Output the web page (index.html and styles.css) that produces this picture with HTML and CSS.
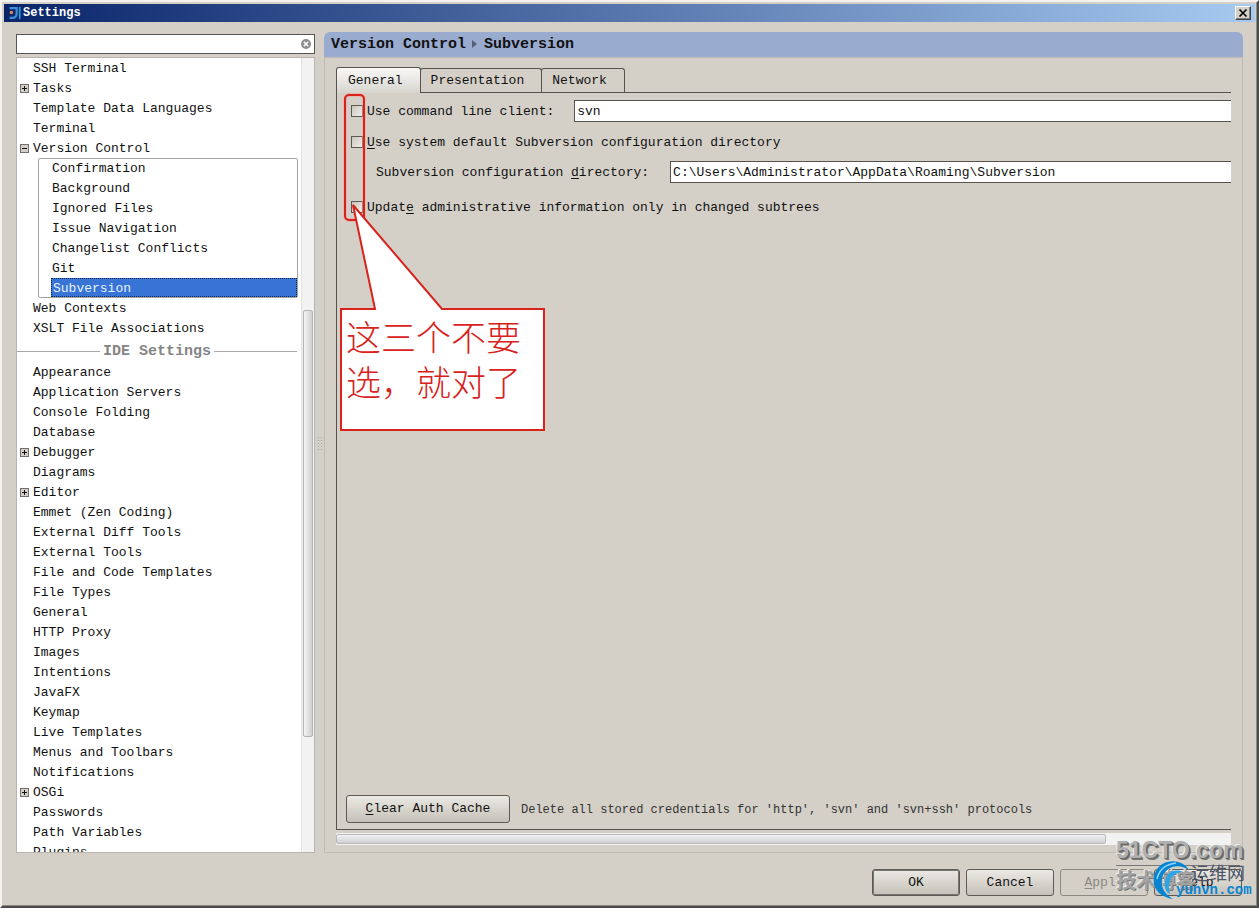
FILE: index.html
```html
<!DOCTYPE html>
<html lang="en">
<head>
<meta charset="utf-8">
<title>Settings</title>
<link rel="stylesheet" href="styles.css">
</head>
<body>
<div class="window">
  <header class="titlebar">
    <svg class="app-icon" viewBox="0 0 16 16" aria-hidden="true">
      <path d="M3 2.500h8v6q0 5-5 5H3" fill="none" stroke="#3f8fd6" stroke-width="2.500"/>
      <circle cx="5" cy="7.500" r="2" fill="#d98a55"/>
      <path d="M14.500 1v14" stroke="#2f9ad8" stroke-width="2"/>
    </svg>
    <h1 class="title">Settings</h1>
    <button class="close" aria-label="Close"><svg viewBox="0 0 10 10" aria-hidden="true"><path d="M1.500 1.500l7 7M8.500 1.500l-7 7" stroke="#000" stroke-width="1.700"/></svg></button>
  </header>

  <div class="content">
    <aside class="sidebar">
      <div class="search">
        <input class="search-input" type="text" aria-label="Search settings">
        <button class="clear" aria-label="Clear search"><svg viewBox="0 0 10 10" aria-hidden="true"><circle cx="5" cy="5" r="5" fill="#8c8c8c"/><path d="M2.800 2.800l4.400 4.400M7.200 2.800L2.800 7.200" stroke="#fff" stroke-width="1.500"/></svg></button>
      </div>
      <div class="tree">
        <div class="tree-view">
          <ul class="list">
            <li class="row">SSH Terminal</li>
            <li class="row"><button class="toggle plus" aria-label="Expand Tasks"></button>Tasks</li>
            <li class="row">Template Data Languages</li>
            <li class="row">Terminal</li>
            <li class="row"><button class="toggle" aria-label="Collapse Version Control"></button>Version Control</li>
          </ul>
          <ul class="list group">
            <li class="sub">Confirmation</li>
            <li class="sub">Background</li>
            <li class="sub">Ignored Files</li>
            <li class="sub">Issue Navigation</li>
            <li class="sub">Changelist Conflicts</li>
            <li class="sub">Git</li>
            <li class="sub selected">Subversion</li>
          </ul>
          <ul class="list">
            <li class="row">Web Contexts</li>
            <li class="row">XSLT File Associations</li>
          </ul>
          <h2 class="divider">IDE Settings</h2>
          <ul class="list">
            <li class="row">Appearance</li>
            <li class="row">Application Servers</li>
            <li class="row">Console Folding</li>
            <li class="row">Database</li>
            <li class="row"><button class="toggle plus" aria-label="Expand Debugger"></button>Debugger</li>
            <li class="row">Diagrams</li>
            <li class="row"><button class="toggle plus" aria-label="Expand Editor"></button>Editor</li>
            <li class="row">Emmet (Zen Coding)</li>
            <li class="row">External Diff Tools</li>
            <li class="row">External Tools</li>
            <li class="row">File and Code Templates</li>
            <li class="row">File Types</li>
            <li class="row">General</li>
            <li class="row">HTTP Proxy</li>
            <li class="row">Images</li>
            <li class="row">Intentions</li>
            <li class="row">JavaFX</li>
            <li class="row">Keymap</li>
            <li class="row">Live Templates</li>
            <li class="row">Menus and Toolbars</li>
            <li class="row">Notifications</li>
            <li class="row"><button class="toggle plus" aria-label="Expand OSGi"></button>OSGi</li>
            <li class="row">Passwords</li>
            <li class="row">Path Variables</li>
            <li class="row">Plugins</li>
          </ul>
        </div>
        <div class="vbar"><div class="vthumb"></div></div>
      </div>
    </aside>

    <div class="splitter"><span class="grip"></span></div>

    <main class="panel">
      <h2 class="crumbs">Version Control<svg class="arrow" viewBox="0 0 6 8" aria-hidden="true"><path d="M0 0l5 4-5 4z" fill="#555f78"/></svg>Subversion</h2>
      <div class="panel-body">
        <div class="tabs" role="tablist">
          <button class="tab active" role="tab" aria-selected="true">General</button>
          <button class="tab" role="tab">Presentation</button>
          <button class="tab" role="tab">Network</button>
        </div>
        <section class="pane">
          <div class="field">
            <input class="check" type="checkbox" id="cli"><label for="cli">Use command line client:</label>
            <input class="text client" type="text" value="svn" aria-label="Command line client">
          </div>
          <div class="field plain">
            <input class="check" type="checkbox" id="sys"><label for="sys"><u>U</u>se system default Subversion configuration directory</label>
          </div>
          <div class="field nested">
            <label for="dir">Subversion configuration <u>d</u>irectory:</label>
            <input class="text directory" type="text" id="dir" value="C:\Users\Administrator\AppData\Roaming\Subversion">
          </div>
          <div class="field last">
            <input class="check" type="checkbox" id="upd"><label for="upd">Updat<u>e</u> administrative information only in changed subtrees</label>
          </div>
          <div class="cache">
            <button class="btn wide"><span><u>C</u>lear Auth Cache</span></button>
            <span class="hint">Delete all stored credentials for 'http', 'svn' and 'svn+ssh' protocols</span>
          </div>
          <div class="callout">
            <svg class="callout-shape" viewBox="0 0 206 340" aria-hidden="true">
              <rect x="6" y="3" width="19" height="125" rx="4" fill="none" stroke="#f0a09a" stroke-width="3"/>
              <rect x="6" y="3" width="19" height="125" rx="4" fill="none" stroke="#d8221c" stroke-width="2"/>
              <path d="M2 217H36L14 113L103 217H205V338H2Z" fill="#fff" stroke="#d8221c" stroke-width="2"/>
            </svg>
            <p class="callout-text" lang="zh-CN">这三个不要<br>选，就对了</p>
          </div>
        </section>
        <div class="hbar"><div class="hthumb"></div></div>
      </div>
    </main>
  </div>

  <footer class="actions">
    <button class="btn default">OK</button>
    <button class="btn">Cancel</button>
    <button class="btn" disabled><span><u>A</u>pply</span></button>
    <button class="btn">Help</button>
  </footer>

  <div class="watermark">
    <span class="wm-site">51CTO.com</span>
    <span class="wm-rule"></span>
    <span class="wm-blog" lang="zh-CN">技术博客</span>
    <svg class="wm-swirl" viewBox="0 0 40 40" aria-hidden="true">
      <path d="M37 10C30-2 9-2 3 13C-2 27 7 37 21 39C11 33 7 24 11 15C16 6 27 3 37 10Z" fill="#0785d2"/>
      <path d="M31 12C22 8 14 13 13 22C12 28 14 32 18 34C16 27 17 19 21 16Q25 12 31 12Z" fill="#2aa5e6"/>
      <path d="M5 19Q8 5 24 3" fill="none" stroke="#8bd3f7" stroke-width="1.500"/>
    </svg>
    <span class="wm-name" lang="zh-CN">运维网</span>
    <span class="wm-url">yunvn.com</span>
  </div>
</div>
</body>
</html>
```
FILE: styles.css
```css
* { box-sizing: border-box; }
body {
  margin: 0;
  background: #d4d0c8;
  color: #111;
  font: 13px/20px "Liberation Mono", "Noto Sans CJK SC", monospace;
}
button, input { font: inherit; color: inherit; margin: 0; padding: 0; border-radius: 0; }
h1, h2, p, ul { margin: 0; padding: 0; }
u { text-underline-offset: 2px; }

.window {
  position: relative;
  display: flex;
  flex-direction: column;
  height: 100vh;
  min-height: 500px;
  padding: 2px;
  border: 2px solid;
  border-color: #f4f2ee #4a4a48 #4a4a48 #f4f2ee;
  box-shadow: inset -1px -1px #8c8a84;
  overflow: hidden;
}
.titlebar {
  display: flex;
  align-items: center;
  flex: none;
  height: 18px;
  padding: 0 4px 0 3px;
  background: linear-gradient(90deg, #0a246a, #a6caf0);
}
.app-icon { width: 14px; height: 14px; margin-right: 2px; }
.title { flex: 1; font-size: 12px; line-height: 18px; color: #fff; }
.close {
  display: grid;
  place-items: center;
  width: 16px;
  height: 14px;
  background: #d4d0c8;
  border: 1px solid;
  border-color: #fff #404040 #404040 #fff;
  box-shadow: inset -1px -1px #808080;
}
.close svg { width: 10px; height: 10px; }

.content { display: flex; flex: 1; min-height: 0; padding: 10px 12px 0; }
.sidebar { display: flex; flex-direction: column; gap: 3px; width: 299px; flex: none; padding-top: 2px; }
.search {
  display: flex;
  align-items: center;
  height: 20px;
  flex: none;
  padding-right: 3px;
  background: #fff;
  border: 1px solid #55574e;
}
.search-input { flex: 1; min-width: 0; height: 18px; border: 0; outline: 0; background: none; }
.clear { width: 10px; height: 10px; border: 0; background: none; }
.clear svg { display: block; width: 10px; height: 10px; }
.tree { display: flex; flex: 1; min-height: 0; border: 1px solid #b8b5ae; background: #fff; }
.tree-view { flex: 1; overflow: hidden; }
.list { list-style: none; }
.row { display: flex; align-items: center; height: 20px; padding: 2px 0 0 16px; }
.row:has(.toggle) { padding-left: 3px; }
.toggle {
  width: 9px;
  height: 9px;
  margin: 0 4px 2px 0;
  border: 1px solid #707070;
  background: linear-gradient(#111, #111) center / 5px 1px no-repeat #d4d0c8;
}
.toggle.plus {
  background: linear-gradient(#111, #111) center / 5px 1px no-repeat, linear-gradient(#111, #111) center / 1px 5px no-repeat #d4d0c8;
}
.group { margin: 0 3px 0 21px; border: 1px solid #a4a4a4; border-radius: 2px; }
.sub { height: 20px; padding-left: 13px; line-height: 22px; }
.sub:first-child { height: 19px; line-height: 20px; }
.sub.selected {
  height: 19px;
  margin-left: 12px;
  padding-left: 1px;
  border: 1px dotted #10284c;
  background: #3874d6;
  color: #e6f2ff;
  line-height: 20px;
}
.divider {
  display: flex;
  align-items: center;
  gap: 3px;
  height: 24px;
  margin-right: 4px;
  padding-top: 3px;
  font-size: 15px;
  line-height: 24px;
  color: #858585;
}
.divider::before, .divider::after { content: ""; flex: 1; height: 1px; background: #a8a8a8; }
.vbar { width: 13px; padding: 252px 1px 0; background: #f2f2f2; border-left: 1px solid #e2e2e2; }
.vthumb { height: 427px; border: 1px solid #b4b4b4; border-radius: 2px; background: linear-gradient(90deg, #f4f4f4, #cfcfd0); }

.splitter { display: flex; align-items: center; justify-content: center; width: 9px; flex: none; }
.grip { width: 5px; height: 14px; background: radial-gradient(circle, #aaa69e 1px, transparent 1px) 0 0 / 3px 3px; }

.panel { display: flex; flex-direction: column; flex: 1; min-width: 0; }
.crumbs {
  flex: none;
  height: 25px;
  padding-left: 7px;
  border-radius: 6px 6px 0 0;
  background: #99abcf;
  font-size: 15px;
  line-height: 25px;
}
.arrow { width: 6px; height: 8px; margin: 0 6px; }
.panel-body {
  display: flex;
  flex-direction: column;
  flex: 1;
  min-height: 0;
  padding: 8px 11px 7px;
  border: 1px solid #bfbbb4;
}
.tabs { display: flex; align-items: flex-end; flex: none; height: 26px; }
.tab {
  height: 24px;
  padding: 0 17px 0 10px;
  margin-right: -1px;
  border: 1px solid #55534e;
  border-bottom: 0;
  border-radius: 3px 3px 0 0;
  background: #d4d0c8;
}
.tab.active { height: 26px; margin-bottom: -1px; padding: 0 17px 0 11px; background: linear-gradient(#f8f8f6, #d8d5cf); z-index: 1; }
.pane {
  position: relative;
  display: flex;
  flex-direction: column;
  flex: 1;
  min-height: 0;
  padding: 7px 0 6px 14px;
  border: solid #55534e;
  border-width: 1px 0 1px 1px;
}
.field { display: flex; align-items: center; height: 22px; flex: none; }
.field.plain { margin-top: 9px; }
.field.nested { margin-top: 8px; padding-left: 25px; }
.field.last { margin-top: 13px; }
.field label { padding-top: 1px; }
.check { appearance: none; width: 12px; height: 12px; margin-right: 4px; flex: none; border: 1px solid #5b5952; background: linear-gradient(135deg, #c9c6be, #f0eee9); }
.text { flex: 1; min-width: 0; height: 22px; padding-left: 2px; background: #fff; border: 1px solid #55534e; border-right: 0; }
.client { margin-left: 20px; }
.directory { margin-left: 21px; }
.cache { display: flex; align-items: center; gap: 11px; margin-top: auto; margin-left: -5px; }
.hint { padding-top: 2px; font-size: 12px; color: #333; }
.btn {
  width: 88px;
  height: 27px;
  border: 1px solid #5d5b55;
  border-radius: 3px;
  background: linear-gradient(#ebe9e4, #c5c1b8);
}
.btn.wide { width: 164px; height: 28px; }
.btn.default { box-shadow: inset 0 0 0 1px #77746d; }
.btn:disabled { color: #8c8983; border-color: #8c8983; background: #d4d0c8; }
.hbar { flex: none; height: 12px; margin-top: 3px; padding: 1px 0; background: #f2f2f2; }
.hthumb { width: 86%; height: 10px; border: 1px solid #b9b9b9; border-radius: 2px; background: linear-gradient(#f2f2f4, #cfd0d3); }

.actions { display: flex; justify-content: flex-end; gap: 6px; flex: none; padding: 16px 13px 8px; }

.callout { position: absolute; left: 2px; top: -1px; width: 206px; height: 340px; pointer-events: none; }
.callout-shape { display: block; width: 206px; height: 340px; }
.callout-text {
  position: absolute;
  left: 7px;
  top: 221px;
  color: #d8221c;
  font: 300 35px/45px "Noto Sans CJK SC", sans-serif;
  white-space: nowrap;
}

.watermark { position: absolute; right: 2px; bottom: 2px; width: 142px; height: 74px; pointer-events: none; white-space: nowrap; }
.watermark > * { position: absolute; }
.wm-site {
  left: 3px;
  top: 5px;
  font: bold 23px/30px "Liberation Sans", sans-serif;
  color: #b0b0b0;
  text-shadow: 1px 1px #666, 2px 2px #777, -1px -1px #eee;
}
.wm-rule { left: 3px; top: 35px; width: 124px; height: 1px; background: #777; }
.wm-blog { left: 3px; top: 38px; font: bold 20px/24px "Noto Sans CJK SC", sans-serif; color: #a4a4a4; text-shadow: 1px 1px #777, -1px -1px #eee; }
.wm-swirl { left: 39px; top: 30px; width: 40px; height: 40px; }
.wm-name { left: 78px; top: 31px; font: 18px/22px "Noto Sans CJK SC", sans-serif; color: #4d5566; }
.wm-url { left: 63px; top: 51px; font: bold 14px/18px "Liberation Mono", monospace; color: #0785d2; }
```
